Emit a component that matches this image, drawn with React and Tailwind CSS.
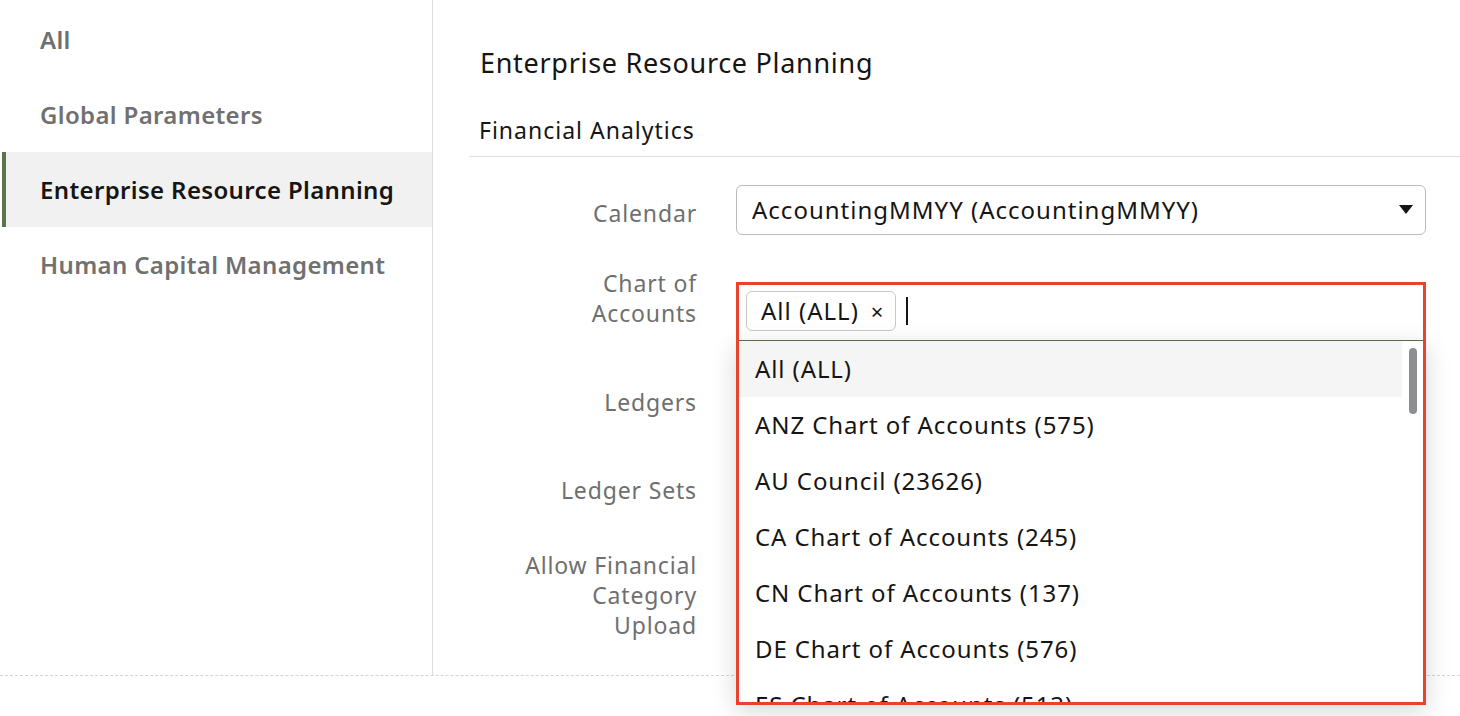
import React from "react";

const sideItems = [
  { label: "All" },
  { label: "Global Parameters" },
  { label: "Enterprise Resource Planning", active: true },
  { label: "Human Capital Management" },
];

const options = [
  "All (ALL)",
  "ANZ Chart of Accounts (575)",
  "AU Council (23626)",
  "CA Chart of Accounts (245)",
  "CN Chart of Accounts (137)",
  "DE Chart of Accounts (576)",
  "ES Chart of Accounts (513)",
];

function Label({ children, className = "" }) {
  return (
    <div
      className={`w-[228px] shrink-0 text-right text-[23px] leading-[30px] tracking-[0.85px] text-[#6f6f6f] ${className}`}
    >
      {children}
    </div>
  );
}

export default function App() {
  return (
    <div
      className="h-[716px] w-[1460px] overflow-hidden bg-white text-[#161513]"
      style={{ fontFamily: '"Noto Sans", "Open Sans", sans-serif' }}
    >
      <div className="flex h-[676px] border-b border-dashed border-[#d4d4d4]">
        {/* Sidebar */}
        <div className="flex w-[433px] shrink-0 flex-col border-r border-[#dcdcdc] pt-[2px]">
          {sideItems.map((it) => (
            <div
              key={it.label}
              className={`ml-[2px] flex h-[75px] items-center border-l-4 pl-[34px] text-[24px] font-semibold tracking-[0.35px] ${
                it.active
                  ? "border-[#5b7349] bg-[#f1f1f1] text-[#161513]"
                  : "border-transparent text-[#707070]"
              }`}
            >
              {it.label}
            </div>
          ))}
        </div>

        {/* Main */}
        <div className="flex min-w-0 flex-1 flex-col pl-[36px] pt-[45px]">
          <div className="pl-[11px] text-[27px] leading-[36px] tracking-[0.7px]">
            Enterprise Resource Planning
          </div>
          <div className="mt-[34px] pl-[10px] text-[23px] leading-[30px] tracking-[1px]">
            Financial Analytics
          </div>
          <div className="mt-[11px] border-b border-[#dedede]" />

          {/* Calendar row */}
          <div className="mt-[28px] flex items-start gap-[39px]">
            <Label className="pt-[13px]">Calendar</Label>
            <div className="flex h-[50px] w-[690px] items-center justify-between rounded-[6px] border border-[#bcbcbc] pl-[15px] pr-[12px]">
              <span className="text-[24px] tracking-[1px]">AccountingMMYY (AccountingMMYY)</span>
              <svg width="14" height="10" viewBox="0 0 14 10">
                <path d="M0 0 L14 0 L7 9 Z" fill="#161513" />
              </svg>
            </div>
          </div>

          {/* Chart of Accounts row */}
          <div className="mt-[33px] flex items-start gap-[39px]">
            <Label>
              Chart of
              <br />
              Accounts
            </Label>
            <div className="relative mt-[14px] w-[690px]">
              <div className="flex h-[59px] items-center border-b border-[#5b7349] pl-[10px]">
                <div className="flex h-[40px] items-center gap-[12px] rounded-[6px] border border-[#c8c8c8] pl-[14px] pr-[11px] text-[24px] tracking-[1px]">
                  <span>All (ALL)</span>
                  <span className="text-[22px]">×</span>
                </div>
                <div className="ml-[10px] h-[28px] w-[2px] bg-[#161513]" />
              </div>

              {/* Listbox popup */}
              <div className="absolute left-0 right-0 top-[59px] z-10 h-[364px] overflow-hidden bg-white shadow-[0_6px_24px_rgba(0,0,0,0.16)]">
                <div className="pr-[24px]">
                  {options.map((o, i) => (
                    <div
                      key={o}
                      className={`flex h-[56px] items-center whitespace-nowrap pl-[19px] text-[24px] tracking-[0.9px] ${
                        i === 0 ? "bg-[#f5f5f5]" : ""
                      }`}
                    >
                      {o}
                    </div>
                  ))}
                </div>
                <div className="absolute right-[9px] top-[7px] h-[66px] w-[8px] rounded-full bg-[#8d8e90]" />
              </div>

              {/* Highlight outline */}
              <div className="pointer-events-none absolute left-0 right-0 top-0 z-20 h-[423px] border-[3px] border-[#e8432d]" />
            </div>
          </div>

          {/* Ledgers */}
          <div className="mt-[33px] flex items-start gap-[39px]">
            <Label className="pt-[13px]">Ledgers</Label>
          </div>

          {/* Ledger Sets */}
          <div className="mt-[58px] flex items-start gap-[39px]">
            <Label>Ledger Sets</Label>
          </div>

          {/* Allow Financial Category Upload */}
          <div className="mt-[45px] flex items-start gap-[39px]">
            <Label>
              Allow Financial
              <br />
              Category
              <br />
              Upload
            </Label>
          </div>
        </div>
      </div>
    </div>
  );
}
